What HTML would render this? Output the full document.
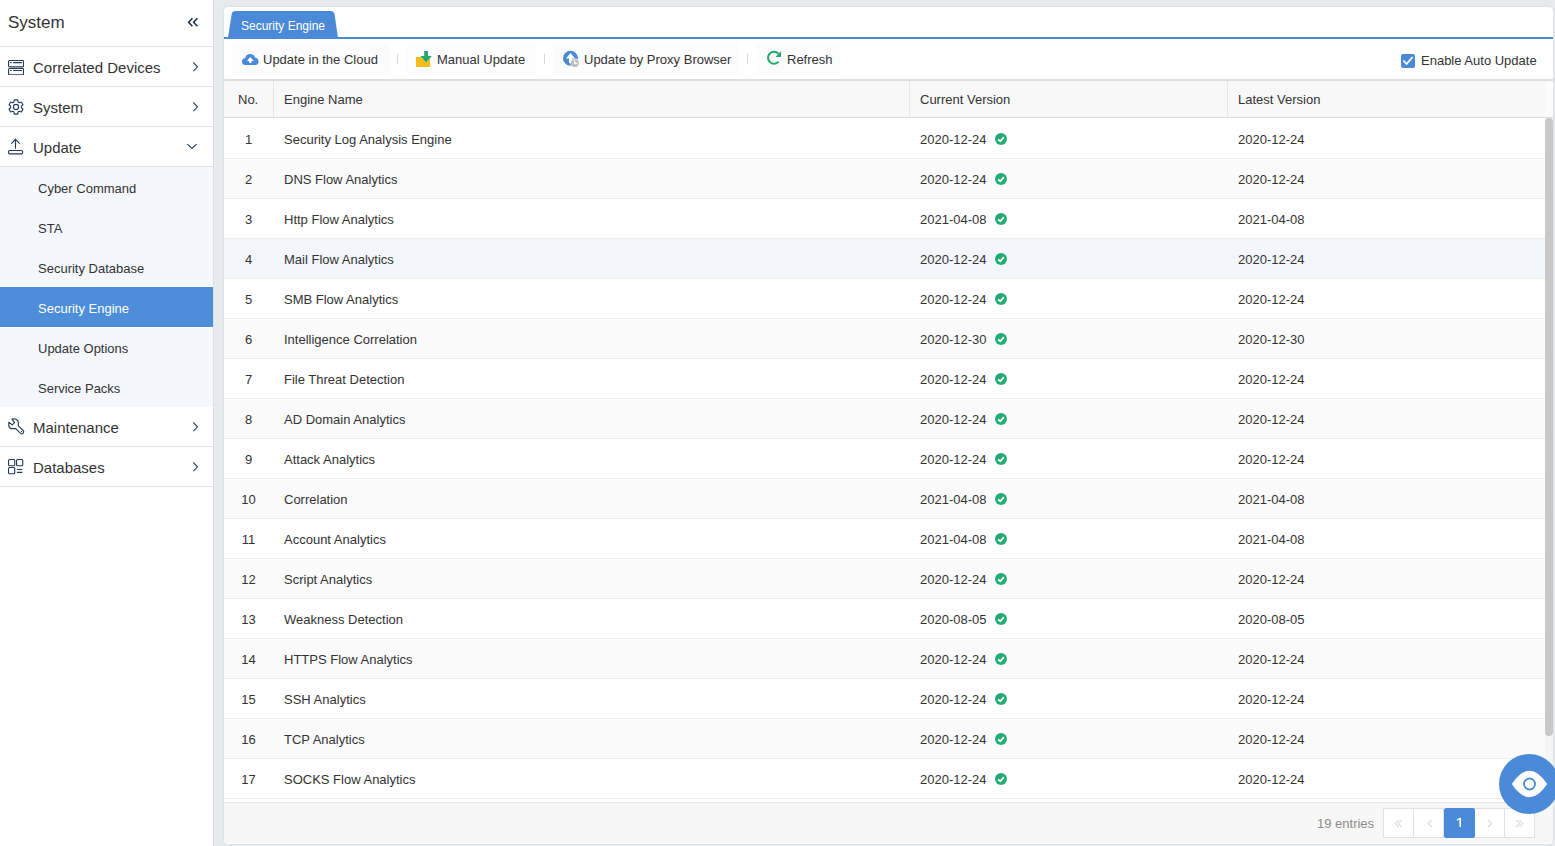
<!DOCTYPE html>
<html><head><meta charset="utf-8">
<style>
*{box-sizing:border-box;margin:0;padding:0}
html,body{width:1555px;height:846px;overflow:hidden}
body{background:#e8ebee;font-family:"Liberation Sans",sans-serif;color:#333;position:relative;font-size:13px}
.abs{position:absolute}
#side{left:0;top:0;width:214px;height:846px;background:#fff;border-right:1px solid #dcdfe3}
#side .hd{position:absolute;left:0;top:0;width:213px;height:47px;border-bottom:1px solid #e4e4e4}
#side .hd .t{position:absolute;left:8px;top:13px;font-size:17px;line-height:20px;color:#333}
.mi{position:absolute;left:0;width:213px;height:40px;border-bottom:1px solid #e4e4e4}
.mi .t{position:absolute;left:33px;top:12px;font-size:15px;line-height:18px;color:#333}
.mi svg.ic{position:absolute;left:8px;top:12px}
.mi svg.ar2{left:192px;top:14px}
#sub{position:absolute;left:0;top:167px;width:213px;height:240px;background:#f4f7fb}
.si{position:absolute;left:0;width:213px;height:40px}
.si .t{position:absolute;left:38px;top:14px;font-size:13px;line-height:15px;color:#333}
.si.act{background:#4d8dda;box-shadow:0 -1px 0 #fff,0 1px 0 #fff}
.si.act .t{color:#fff}
#card{left:224px;top:7px;width:1329px;height:837px;background:#fff;border-radius:4px;box-shadow:0 0 2px rgba(0,0,0,.12)}

.tab{left:257px;top:11px;width:81px;height:27px}
.tabline{left:224px;top:37px;width:1329px;height:2px;background:#4a8ad8}
.tabtxt{left:241px;top:19px;font-size:12px;line-height:14px;color:#fff;white-space:nowrap}
.tb{height:29px;top:44px;background:#fcfcfc;border-radius:4px}
.tbt{top:52px;font-size:13px;line-height:15px;color:#333;white-space:nowrap}
.sep{top:54px;width:1px;height:10px;background:#d8d8d8}
.tbline{left:224px;top:79px;width:1329px;height:2px;background:#dedede}
.thead{left:224px;top:81px;width:1321px;height:37px;background:#f8f8f8;border-bottom:1px solid #dcdcdc}
.thead2{left:1545px;top:81px;width:8px;height:37px;background:#fcfcfc;border-bottom:1px solid #dcdcdc}
.thd{top:92px;font-size:13px;line-height:15px;color:#333;white-space:nowrap}
.vdiv{top:81px;width:1px;height:36px;background:#e6e6e6}
.row{position:absolute;left:224px;width:1321px;height:40px;background:#fff;border-bottom:1px solid #eeeeee}
.row.alt{background:#fbfbfb}
.row.hov{background:#f3f6fb}
.row span{position:absolute;top:13px;font-size:13px;line-height:15px;color:#333;white-space:nowrap}
.row .c0{left:0;width:49px;text-align:center}
.row .c1{left:60px}
.row .c2{left:696px}
.row .c3{left:1014px}
.row .ok{position:absolute;left:770px;top:13px}
.sbtrack{left:1545px;top:118px;width:8px;height:684px;background:#f5f5f5}
.sbthumb{left:1545px;top:118px;width:8px;height:618px;background:#c8c8c8;border-radius:4px}
.foot{left:224px;top:802px;width:1329px;height:41px;background:#f7f7f7;border-top:1px solid #e8e8e8;border-radius:0 0 3px 3px}
.pg{top:808px;width:31px;height:30px;background:#fff;border:1px solid #e2e2e2;color:#bbb;font-size:14px;line-height:28px;text-align:center}
.pg.on{background:#4a8ad8;border-color:#4a8ad8;color:#fff;border-radius:2px;width:31px}
.eye{left:1499px;top:754px;width:60px;height:60px;border-radius:50%;background:#4a8ad8}
</style></head><body>
<div id="side" class="abs">
  <div class="hd"><div class="t">System</div>
    <svg class="abs" style="left:187px;top:17px" width="12" height="11" viewBox="0 0 12 11"><path d="M5.4 1.3 L1.6 5.3 L5.4 9.3 M10.4 1.3 L6.6 5.3 L10.4 9.3" fill="none" stroke="#1d2b45" stroke-width="1.5"/></svg>
  </div>
  <div class="mi" style="top:47px"><svg class="abs" style="left:8px;top:13px" width="16" height="15" viewBox="0 0 16 15"><rect x="0.55" y="0.55" width="15" height="6.3" rx="1" fill="none" stroke="#253858" stroke-width="1.1"/><rect x="0.55" y="8.55" width="15" height="6.3" rx="1" fill="none" stroke="#253858" stroke-width="1.1"/><path d="M2.6 2.6 H3.4 M5.5 2.6 H13.5 M2.6 10.5 H3.4 M5.5 10.5 H13.5" stroke="#253858" stroke-width="1.1" stroke-linecap="round"/></svg><div class="t">Correlated Devices</div><svg class="abs ar2" width="8" height="12" viewBox="0 0 8 12"><path d="M1.3 1.4 L5.5 5.8 L1.3 10.2" fill="none" stroke="#253858" stroke-width="1.05"/></svg></div>
  <div class="mi" style="top:87px"><svg class="abs" style="left:8px;top:12px" width="16" height="16" viewBox="0 0 16 16"><path d="M10.02 2.99 L9.64 0.89 L6.36 0.89 L5.98 2.99 L4.68 3.74 L2.66 3.02 L1.02 5.87 L2.65 7.25 L2.65 8.75 L1.02 10.13 L2.66 12.98 L4.68 12.26 L5.98 13.01 L6.36 15.11 L9.64 15.11 L10.02 13.01 L11.32 12.26 L13.34 12.98 L14.98 10.13 L13.35 8.75 L13.35 7.25 L14.98 5.87 L13.34 3.02 L11.32 3.74 Z" fill="none" stroke="#253858" stroke-width="1.1" stroke-linejoin="round"/><circle cx="8" cy="8" r="2.6" fill="none" stroke="#253858" stroke-width="1.1"/></svg><div class="t">System</div><svg class="abs ar2" width="8" height="12" viewBox="0 0 8 12"><path d="M1.3 1.4 L5.5 5.8 L1.3 10.2" fill="none" stroke="#253858" stroke-width="1.05"/></svg></div>
  <div class="mi" style="top:127px"><svg class="abs" style="left:8px;top:11px" width="16" height="17" viewBox="0 0 16 17"><path d="M3.3 5.7 L7.5 1.4 L11.7 5.7 M7.5 1.6 L7.5 10.8" fill="none" stroke="#253858" stroke-width="1.1"/><rect x="0.55" y="12.55" width="14" height="3.3" rx="1" fill="none" stroke="#253858" stroke-width="1.1"/></svg><div class="t">Update</div><svg class="abs" style="left:186px;top:16px" width="12" height="8" viewBox="0 0 12 8"><path d="M1.4 1.2 L5.9 5.5 L10.6 1.2" fill="none" stroke="#253858" stroke-width="1.05"/></svg></div>
  <div id="sub">
    <div class="si" style="top:0"><div class="t">Cyber Command</div></div>
    <div class="si" style="top:40px"><div class="t">STA</div></div>
    <div class="si" style="top:80px"><div class="t">Security Database</div></div>
    <div class="si act" style="top:120px"><div class="t">Security Engine</div></div>
    <div class="si" style="top:160px"><div class="t">Update Options</div></div>
    <div class="si" style="top:200px"><div class="t">Service Packs</div></div>
  </div>
  <div class="mi" style="top:407px"><svg class="abs" style="left:8px;top:11px" width="17" height="17" viewBox="0 0 17 17"><path d="M3.9 1.1 Q6.3 0.6 8 1.2 Q10.5 2.2 10.4 5 L10.4 7.9 L15.3 12.6 Q16.2 14 15 15.3 Q13.8 16.3 12.6 15.4 L7.7 10.6 L3.4 10.6 Q0.8 10.2 0.8 7.4 L0.8 4.2 L4.3 6.9 L6.6 4.6 Z" fill="none" stroke="#253858" stroke-width="1.1" stroke-linejoin="round"/><circle cx="13.5" cy="13.6" r="0.55" fill="#253858"/></svg><div class="t">Maintenance</div><svg class="abs ar2" width="8" height="12" viewBox="0 0 8 12"><path d="M1.3 1.4 L5.5 5.8 L1.3 10.2" fill="none" stroke="#253858" stroke-width="1.05"/></svg></div>
  <div class="mi" style="top:447px"><svg class="abs" style="left:8px;top:12px" width="16" height="16" viewBox="0 0 16 16"><rect x="0.55" y="0.55" width="6.2" height="6.2" rx="1" fill="none" stroke="#253858" stroke-width="1.1"/><rect x="8.55" y="0.55" width="6.2" height="6.2" rx="1" fill="none" stroke="#253858" stroke-width="1.1"/><rect x="0.55" y="8.55" width="6.2" height="6.2" rx="1" fill="none" stroke="#253858" stroke-width="1.1"/><path d="M9.4 10.5 H13.9 M9.4 13.4 H13.9" stroke="#253858" stroke-width="1.1" stroke-linecap="round"/></svg><div class="t">Databases</div><svg class="abs ar2" width="8" height="12" viewBox="0 0 8 12"><path d="M1.3 1.4 L5.5 5.8 L1.3 10.2" fill="none" stroke="#253858" stroke-width="1.05"/></svg></div>
</div>
<div id="card" class="abs"></div>
<svg class="abs" style="left:227px;top:11px" width="112" height="27" viewBox="0 0 112 27"><path d="M1 27 L4.6 3.5 Q5 0 8.5 0 L103.5 0 Q107 0 107.6 3.5 L111 27 Z" fill="#4a8ad8"/></svg>
<div class="abs tabline"></div>
<div class="abs tabtxt">Security Engine</div>

<div class="abs tb" style="left:232px;width:157px"></div>
<svg class="abs" style="left:242px;top:54px" width="17" height="11" viewBox="0 0 17 11"><path d="M3.5 11 Q0 11 0 7.5 Q0 4.6 3 4.2 Q4.2 0 8.3 0 Q12 0 13 3.6 Q16.5 4.3 16.5 7.5 Q16.5 11 13 11 Z" fill="#4a8ad8"/><path d="M8.3 3 L4.9 6.9 L7.2 6.9 L7.2 9 L9.4 9 L9.4 6.9 L11.7 6.9 Z" fill="#fff"/></svg>
<div class="abs tbt" style="left:263px">Update in the Cloud</div>
<div class="abs sep" style="left:397px"></div>

<div class="abs tb" style="left:406px;width:130px"></div>
<svg class="abs" style="left:415px;top:50px" width="18" height="18" viewBox="0 0 18 18"><rect x="1" y="7" width="14" height="10" fill="#f7bd17"/><path d="M9 1 L13 1 L13 6 L17 6 L11 12.6 L5.3 6 L9 6 Z" fill="#fff"/><path d="M9.2 1 L13 1 L13 6 L16.8 6 L11 12.4 L5.5 6 L9.2 6 Z" fill="#22a86c"/></svg>
<div class="abs tbt" style="left:437px">Manual Update</div>
<div class="abs sep" style="left:544px"></div>

<div class="abs tb" style="left:553px;width:186px"></div>
<svg class="abs" style="left:562px;top:50px" width="18" height="19" viewBox="0 0 18 19"><circle cx="8.5" cy="8.3" r="7.5" fill="#4a8ad8"/><path d="M8.5 3 L4 8.6 L7 8.6 L7 13 L10 13 L10 8.6 L13 8.6 Z" fill="#fff"/><circle cx="12.9" cy="13.1" r="4.6" fill="#fff"/><circle cx="12.9" cy="13.1" r="3.9" fill="#bcbcbc"/><path d="M12.6 10.6 L12.6 13.5 L15.2 13.5" fill="none" stroke="#fff" stroke-width="1.3"/></svg>
<div class="abs tbt" style="left:584px">Update by Proxy Browser</div>
<div class="abs sep" style="left:747px"></div>

<div class="abs tb" style="left:756px;width:84px"></div>
<svg class="abs" style="left:766px;top:50px" width="16" height="16" viewBox="0 0 16 16"><path d="M12.6 11.6 A6 6 0 1 1 12.4 3.6" fill="none" stroke="#22a86c" stroke-width="2"/><path d="M15 1 L15 7 L9.5 7 Z" fill="#22a86c"/></svg>
<div class="abs tbt" style="left:787px">Refresh</div>

<svg class="abs" style="left:1401px;top:54px" width="14" height="14" viewBox="0 0 14 14"><rect width="14" height="14" rx="2" fill="#4a8ad8"/><path d="M2.3 6.5 L5.6 10 L11.6 3" fill="none" stroke="#fff" stroke-width="1.8"/></svg>
<div class="abs tbt" style="left:1421px;top:53px">Enable Auto Update</div>
<div class="abs tbline"></div>

<div class="abs thead"></div>
<div class="abs thead2"></div>
<div class="abs vdiv" style="left:273px"></div>
<div class="abs vdiv" style="left:909px"></div>
<div class="abs vdiv" style="left:1227px"></div>
<div class="abs thd" style="left:238px">No.</div>
<div class="abs thd" style="left:284px">Engine Name</div>
<div class="abs thd" style="left:920px">Current Version</div>
<div class="abs thd" style="left:1238px">Latest Version</div>
<div class="row" style="top:119px"><span class="c0">1</span><span class="c1">Security Log Analysis Engine</span><span class="c2">2020-12-24</span><svg class="ok" width="14" height="14" viewBox="0 0 14 14"><circle cx="7" cy="7" r="6" fill="#22ac74"/><path d="M4.1 7.3 L6.2 9.2 L9.9 5.1" fill="none" stroke="#fff" stroke-width="1.7"/></svg><span class="c3">2020-12-24</span></div>
<div class="row alt" style="top:159px"><span class="c0">2</span><span class="c1">DNS Flow Analytics</span><span class="c2">2020-12-24</span><svg class="ok" width="14" height="14" viewBox="0 0 14 14"><circle cx="7" cy="7" r="6" fill="#22ac74"/><path d="M4.1 7.3 L6.2 9.2 L9.9 5.1" fill="none" stroke="#fff" stroke-width="1.7"/></svg><span class="c3">2020-12-24</span></div>
<div class="row" style="top:199px"><span class="c0">3</span><span class="c1">Http Flow Analytics</span><span class="c2">2021-04-08</span><svg class="ok" width="14" height="14" viewBox="0 0 14 14"><circle cx="7" cy="7" r="6" fill="#22ac74"/><path d="M4.1 7.3 L6.2 9.2 L9.9 5.1" fill="none" stroke="#fff" stroke-width="1.7"/></svg><span class="c3">2021-04-08</span></div>
<div class="row hov" style="top:239px"><span class="c0">4</span><span class="c1">Mail Flow Analytics</span><span class="c2">2020-12-24</span><svg class="ok" width="14" height="14" viewBox="0 0 14 14"><circle cx="7" cy="7" r="6" fill="#22ac74"/><path d="M4.1 7.3 L6.2 9.2 L9.9 5.1" fill="none" stroke="#fff" stroke-width="1.7"/></svg><span class="c3">2020-12-24</span></div>
<div class="row" style="top:279px"><span class="c0">5</span><span class="c1">SMB Flow Analytics</span><span class="c2">2020-12-24</span><svg class="ok" width="14" height="14" viewBox="0 0 14 14"><circle cx="7" cy="7" r="6" fill="#22ac74"/><path d="M4.1 7.3 L6.2 9.2 L9.9 5.1" fill="none" stroke="#fff" stroke-width="1.7"/></svg><span class="c3">2020-12-24</span></div>
<div class="row alt" style="top:319px"><span class="c0">6</span><span class="c1">Intelligence Correlation</span><span class="c2">2020-12-30</span><svg class="ok" width="14" height="14" viewBox="0 0 14 14"><circle cx="7" cy="7" r="6" fill="#22ac74"/><path d="M4.1 7.3 L6.2 9.2 L9.9 5.1" fill="none" stroke="#fff" stroke-width="1.7"/></svg><span class="c3">2020-12-30</span></div>
<div class="row" style="top:359px"><span class="c0">7</span><span class="c1">File Threat Detection</span><span class="c2">2020-12-24</span><svg class="ok" width="14" height="14" viewBox="0 0 14 14"><circle cx="7" cy="7" r="6" fill="#22ac74"/><path d="M4.1 7.3 L6.2 9.2 L9.9 5.1" fill="none" stroke="#fff" stroke-width="1.7"/></svg><span class="c3">2020-12-24</span></div>
<div class="row alt" style="top:399px"><span class="c0">8</span><span class="c1">AD Domain Analytics</span><span class="c2">2020-12-24</span><svg class="ok" width="14" height="14" viewBox="0 0 14 14"><circle cx="7" cy="7" r="6" fill="#22ac74"/><path d="M4.1 7.3 L6.2 9.2 L9.9 5.1" fill="none" stroke="#fff" stroke-width="1.7"/></svg><span class="c3">2020-12-24</span></div>
<div class="row" style="top:439px"><span class="c0">9</span><span class="c1">Attack Analytics</span><span class="c2">2020-12-24</span><svg class="ok" width="14" height="14" viewBox="0 0 14 14"><circle cx="7" cy="7" r="6" fill="#22ac74"/><path d="M4.1 7.3 L6.2 9.2 L9.9 5.1" fill="none" stroke="#fff" stroke-width="1.7"/></svg><span class="c3">2020-12-24</span></div>
<div class="row alt" style="top:479px"><span class="c0">10</span><span class="c1">Correlation</span><span class="c2">2021-04-08</span><svg class="ok" width="14" height="14" viewBox="0 0 14 14"><circle cx="7" cy="7" r="6" fill="#22ac74"/><path d="M4.1 7.3 L6.2 9.2 L9.9 5.1" fill="none" stroke="#fff" stroke-width="1.7"/></svg><span class="c3">2021-04-08</span></div>
<div class="row" style="top:519px"><span class="c0">11</span><span class="c1">Account Analytics</span><span class="c2">2021-04-08</span><svg class="ok" width="14" height="14" viewBox="0 0 14 14"><circle cx="7" cy="7" r="6" fill="#22ac74"/><path d="M4.1 7.3 L6.2 9.2 L9.9 5.1" fill="none" stroke="#fff" stroke-width="1.7"/></svg><span class="c3">2021-04-08</span></div>
<div class="row alt" style="top:559px"><span class="c0">12</span><span class="c1">Script Analytics</span><span class="c2">2020-12-24</span><svg class="ok" width="14" height="14" viewBox="0 0 14 14"><circle cx="7" cy="7" r="6" fill="#22ac74"/><path d="M4.1 7.3 L6.2 9.2 L9.9 5.1" fill="none" stroke="#fff" stroke-width="1.7"/></svg><span class="c3">2020-12-24</span></div>
<div class="row" style="top:599px"><span class="c0">13</span><span class="c1">Weakness Detection</span><span class="c2">2020-08-05</span><svg class="ok" width="14" height="14" viewBox="0 0 14 14"><circle cx="7" cy="7" r="6" fill="#22ac74"/><path d="M4.1 7.3 L6.2 9.2 L9.9 5.1" fill="none" stroke="#fff" stroke-width="1.7"/></svg><span class="c3">2020-08-05</span></div>
<div class="row alt" style="top:639px"><span class="c0">14</span><span class="c1">HTTPS Flow Analytics</span><span class="c2">2020-12-24</span><svg class="ok" width="14" height="14" viewBox="0 0 14 14"><circle cx="7" cy="7" r="6" fill="#22ac74"/><path d="M4.1 7.3 L6.2 9.2 L9.9 5.1" fill="none" stroke="#fff" stroke-width="1.7"/></svg><span class="c3">2020-12-24</span></div>
<div class="row" style="top:679px"><span class="c0">15</span><span class="c1">SSH Analytics</span><span class="c2">2020-12-24</span><svg class="ok" width="14" height="14" viewBox="0 0 14 14"><circle cx="7" cy="7" r="6" fill="#22ac74"/><path d="M4.1 7.3 L6.2 9.2 L9.9 5.1" fill="none" stroke="#fff" stroke-width="1.7"/></svg><span class="c3">2020-12-24</span></div>
<div class="row alt" style="top:719px"><span class="c0">16</span><span class="c1">TCP Analytics</span><span class="c2">2020-12-24</span><svg class="ok" width="14" height="14" viewBox="0 0 14 14"><circle cx="7" cy="7" r="6" fill="#22ac74"/><path d="M4.1 7.3 L6.2 9.2 L9.9 5.1" fill="none" stroke="#fff" stroke-width="1.7"/></svg><span class="c3">2020-12-24</span></div>
<div class="row" style="top:759px"><span class="c0">17</span><span class="c1">SOCKS Flow Analytics</span><span class="c2">2020-12-24</span><svg class="ok" width="14" height="14" viewBox="0 0 14 14"><circle cx="7" cy="7" r="6" fill="#22ac74"/><path d="M4.1 7.3 L6.2 9.2 L9.9 5.1" fill="none" stroke="#fff" stroke-width="1.7"/></svg><span class="c3">2020-12-24</span></div>
<div class="abs sbtrack"></div>
<div class="abs sbthumb"></div>
<div class="abs foot"></div>
<div class="abs tbt" style="left:1317px;top:816px;color:#8c8c8c">19 entries</div>
<div class="abs pg" style="left:1383px"></div>
<div class="abs pg" style="left:1413px"></div>
<div class="abs pg" style="left:1474px"></div>
<div class="abs pg" style="left:1504px"></div>
<div class="abs pg on" style="left:1444px"></div><svg class="abs" style="left:1455px;top:817px" width="8" height="11" viewBox="0 0 8 11"><path d="M5.2 1 L5.2 10" stroke="#fff" stroke-width="1.6"/><path d="M5.6 1 L2 3.3" stroke="#fff" stroke-width="1.3"/></svg>
<svg class="abs" style="left:1394px;top:819px" width="10" height="10" viewBox="0 0 10 10"><path d="M4.8 1 L1.3 4.5 L4.8 8 M7.8 1 L4.3 4.5 L7.8 8" fill="none" stroke="#c6c6c6" stroke-width="1"/></svg>
<svg class="abs" style="left:1427px;top:819px" width="6" height="10" viewBox="0 0 6 10"><path d="M4.6 1 L1.1 4.5 L4.6 8" fill="none" stroke="#c6c6c6" stroke-width="1"/></svg>
<svg class="abs" style="left:1487px;top:819px" width="6" height="10" viewBox="0 0 6 10"><path d="M1.1 1 L4.6 4.5 L1.1 8" fill="none" stroke="#c6c6c6" stroke-width="1"/></svg>
<svg class="abs" style="left:1515px;top:819px" width="10" height="10" viewBox="0 0 10 10"><path d="M1.3 1 L4.8 4.5 L1.3 8 M4.3 1 L7.8 4.5 L4.3 8" fill="none" stroke="#c6c6c6" stroke-width="1"/></svg>
<div class="abs eye"></div>
<svg class="abs" style="left:1511px;top:768px" width="38" height="32" viewBox="0 0 38 32"><path d="M0.8 16 Q18.5 -10.5 36.2 16 Q18.5 42.5 0.8 16 Z" fill="#fff"/><circle cx="18.5" cy="16" r="5.5" fill="none" stroke="#4a8ad8" stroke-width="1.8"/></svg>

</body></html>
